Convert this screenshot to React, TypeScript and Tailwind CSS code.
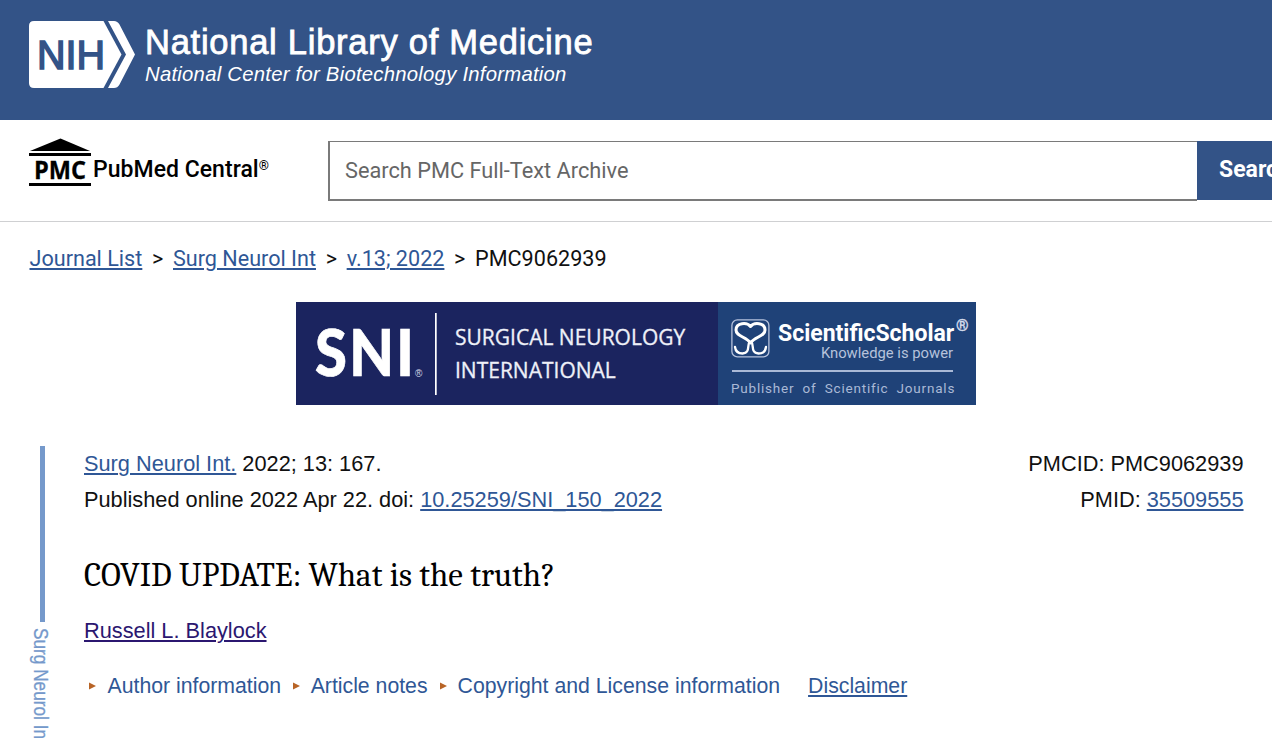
import React from "react";

const roboto = "font-['Roboto','Liberation_Sans',sans-serif]";
const link = "text-[#2f5796] underline decoration-[1.6px] underline-offset-[2px]";

function NihLogo() {
  return (
    <svg width="106" height="68" viewBox="0 0 106 68" className="block shrink-0" aria-label="NIH">
      <path d="M5 0H74.500L92.500 33.500L74.500 67H5Q0 67 0 62V5Q0 0 5 0Z" fill="#fff" />
      <path d="M79 0H85Q88.500 0 90.500 3.500L106 33.500L90.500 63.500Q88.500 67 85 67H79L97 33.500Z" fill="#fff" />
      <text x="8" y="48" textLength="68" lengthAdjust="spacingAndGlyphs" fontSize="41.500" fill="#335387" stroke="#335387" strokeWidth="1.600" fontFamily="Liberation Sans, sans-serif">NIH</text>
    </svg>
  );
}

function PmcLogo() {
  return (
    <svg width="62" height="48" viewBox="0 0 62 48" className="block shrink-0" aria-label="PMC">
      <path d="M1 13L31.500 0.500L61 13Z" />
      <rect y="15" width="62" height="3" />
      <rect y="45" width="62" height="3" />
      <text x="5" y="40.500" textLength="52" lengthAdjust="spacingAndGlyphs" fontSize="25.500" fontWeight="700" stroke="#000" strokeWidth="0.300" fontFamily="Open Sans, Noto Sans, sans-serif">PMC</text>
    </svg>
  );
}

function ScholarIcon() {
  return (
    <svg width="39" height="39" viewBox="0 0 39 39" className="block shrink-0" fill="none">
      <rect x="0.900" y="0.900" width="37" height="37" rx="5.500" stroke="#b6c2dc" strokeWidth="1.300" />
      <g stroke="#fff" strokeLinecap="round" strokeLinejoin="round">
        <path d="M19.500 7.500C16 3 5 3.500 5 11C5 17.500 15 17.500 19.500 24M19.500 7.500C23 3 34 3.500 34 11C34 17.500 24 17.500 19.500 24" strokeWidth="3" />
        <path d="M18.500 23C16 26 19.500 34 11.500 34.500C7 34.500 4.500 32 4 28M20.500 23C23 26 19.500 34 27.500 34.500C32 34.500 34.500 32 35 28" strokeWidth="2.300" />
      </g>
    </svg>
  );
}

function Triangle() {
  return (
    <svg width="7" height="8" viewBox="0 0 7 8" className="block shrink-0">
      <path d="M0 0.500L7 4L0 7.500Z" fill="#b86426" />
    </svg>
  );
}

function Header() {
  return (
    <header className="flex h-[120px] items-start bg-[#335387] pt-[21px] pl-[29px]">
      <NihLogo />
      <div className="ml-[10px] text-white">
        <div className="pt-[1px] text-[34.500px] leading-[41px] tracking-[0.74px] [-webkit-text-stroke:0.8px_white]">National Library of Medicine</div>
        <div className="text-[20.300px] leading-[22px] italic tracking-[0.25px]">National Center for Biotechnology Information</div>
      </div>
    </header>
  );
}

function SearchRow() {
  return (
    <div className={`flex h-[102px] items-start border-b border-[#cfd0d2] pl-[29px] ${roboto}`}>
      <div className="flex w-[299px] pt-[18px]">
        <PmcLogo />
        <div className="mt-[17px] ml-[2px] text-[23px] leading-[30px] font-medium tracking-[0.03px] text-black">
          PubMed Central<sup className="relative top-[-7px] align-baseline text-[13px] leading-none">®</sup>
        </div>
      </div>
      <div className="mt-[21px] flex h-[60px] w-[869px] items-center border-t border-b-2 border-l-2 border-[#7a7a7a] pl-[15px] text-[21.750px] text-[#666]">
        <span className="pt-[1px]">Search PMC Full-Text Archive</span>
      </div>
      <div className="mt-[21px] flex h-[59px] w-[75px] items-center overflow-hidden bg-[#335387] pl-[22px] text-[23px] font-bold text-white">Search</div>
    </div>
  );
}

function Breadcrumbs() {
  return (
    <nav className={`flex h-[80px] items-start gap-[9.700px] pt-[22px] pl-[29.500px] text-[21.600px] leading-[30px] text-[#111] ${roboto}`}>
      <a className={link}>Journal List</a>
      <span>&gt;</span>
      <a className={link}>Surg Neurol Int</a>
      <span>&gt;</span>
      <a className={link}>v.13; 2022</a>
      <span>&gt;</span>
      <span>PMC9062939</span>
    </nav>
  );
}

function Banner() {
  return (
    <div className="ml-[296px] flex h-[103px] w-[680px] bg-[#1b245f] text-white">
      <svg width="141" height="103" viewBox="0 0 141 103" className="block shrink-0">
        <text x="19" y="74" textLength="101" lengthAdjust="spacingAndGlyphs" letterSpacing="2.500" fill="#fff" stroke="#fff" strokeWidth="0.700" fontSize="65" fontWeight="900" fontFamily="Lato, sans-serif">SNI</text>
        <text x="119" y="74.500" fontSize="10" fill="#d5d8e6" fontFamily="Liberation Sans, sans-serif">®</text>
        <rect x="139" y="11" width="1.700" height="82" fill="#fff" />
      </svg>
      <div className="w-[281px] pt-[18.500px] pl-[18px] font-['Open_Sans','Noto_Sans',sans-serif] text-[21px] leading-[33px] text-[#eef0f8] [-webkit-text-stroke:0.3px_#eef0f8]">
        <div>SURGICAL NEUROLOGY</div>
        <div>INTERNATIONAL</div>
      </div>
      <div className={`w-[258px] bg-[#1f4278] pl-[13px] pt-[17px] ${roboto}`}>
        <div className="flex">
          <ScholarIcon />
          <div className="ml-[8px] w-[176px] text-right">
            <div className="pt-[1px] text-[23px] leading-[28px] font-bold whitespace-nowrap">ScientificScholar</div>
            <div className="mt-[-1px] mr-[1px] text-[14.800px] leading-[12px] whitespace-nowrap text-[#b6c2dc]">Knowledge is power</div>
          </div>
          <div className="mt-[-3px] ml-[2px] text-[16px] leading-[20px] text-[#d5dcec] [-webkit-text-stroke:0.4px_#d5dcec]">®</div>
        </div>
        <div className="mt-[11px] ml-[1px] h-[2px] w-[221px] bg-[#aab9d6]" />
        <div className="mt-[8px] text-[13.500px] leading-[16px] tracking-[0.8px] whitespace-nowrap text-[#aab9d6] [word-spacing:4px]">Publisher of Scientific Journals</div>
      </div>
    </div>
  );
}

function Article() {
  return (
    <main className="flex pt-[41px]">
      <aside className="flex h-[293px] w-[84px] flex-col overflow-hidden pl-[29px]">
        <div className="ml-[11px] h-[176px] w-[4.500px] shrink-0 bg-[#7599cb]" />
        <div className="mt-[6px] h-[111px] w-[24px]">
          <div className="origin-top scale-y-[0.84] text-[20.500px] leading-[25px] whitespace-nowrap text-[#7599cb] [-webkit-text-stroke:0.3px_#7599cb] [writing-mode:vertical-rl]">Surg Neurol Int</div>
        </div>
      </aside>
      <div className="w-[1159.500px] text-[21.750px] leading-[36px] text-[#111]">
        <div className="flex justify-between">
          <div>
            <div><a className={link}>Surg Neurol Int.</a> 2022; 13: 167.</div>
            <div>Published online 2022 Apr 22. doi: <a className={link}>10.25259/SNI_150_2022</a></div>
          </div>
          <div className="text-right">
            <div>PMCID: PMC9062939</div>
            <div>PMID: <a className={link}>35509555</a></div>
          </div>
        </div>
        <h1 className="mt-[37px] font-['Cambria','Liberation_Serif',serif] text-[33px] leading-[40px] tracking-[0.04px] whitespace-nowrap text-black">COVID UPDATE: What is the truth?</h1>
        <div className="mt-[18px]"><a className="text-[#2b1770] underline decoration-[1.6px] underline-offset-[2px]">Russell L. Blaylock</a></div>
        <div className="mt-[19px] flex items-center text-[21.250px] text-[#2f5796]">
          <span className="flex w-[23.500px] pl-[5px]"><Triangle /></span>
          <span>Author information</span>
          <span className="flex w-[29.500px] pl-[12px]"><Triangle /></span>
          <span>Article notes</span>
          <span className="flex w-[30px] pl-[12px]"><Triangle /></span>
          <span>Copyright and License information</span>
          <a className={`ml-[28px] ${link}`}>Disclaimer</a>
        </div>
      </div>
    </main>
  );
}

export default function App() {
  return (
    <div className="h-[739px] w-[1272px] overflow-hidden bg-white font-['Liberation_Sans',Arial,sans-serif]">
      <Header />
      <SearchRow />
      <Breadcrumbs />
      <Banner />
      <Article />
    </div>
  );
}
